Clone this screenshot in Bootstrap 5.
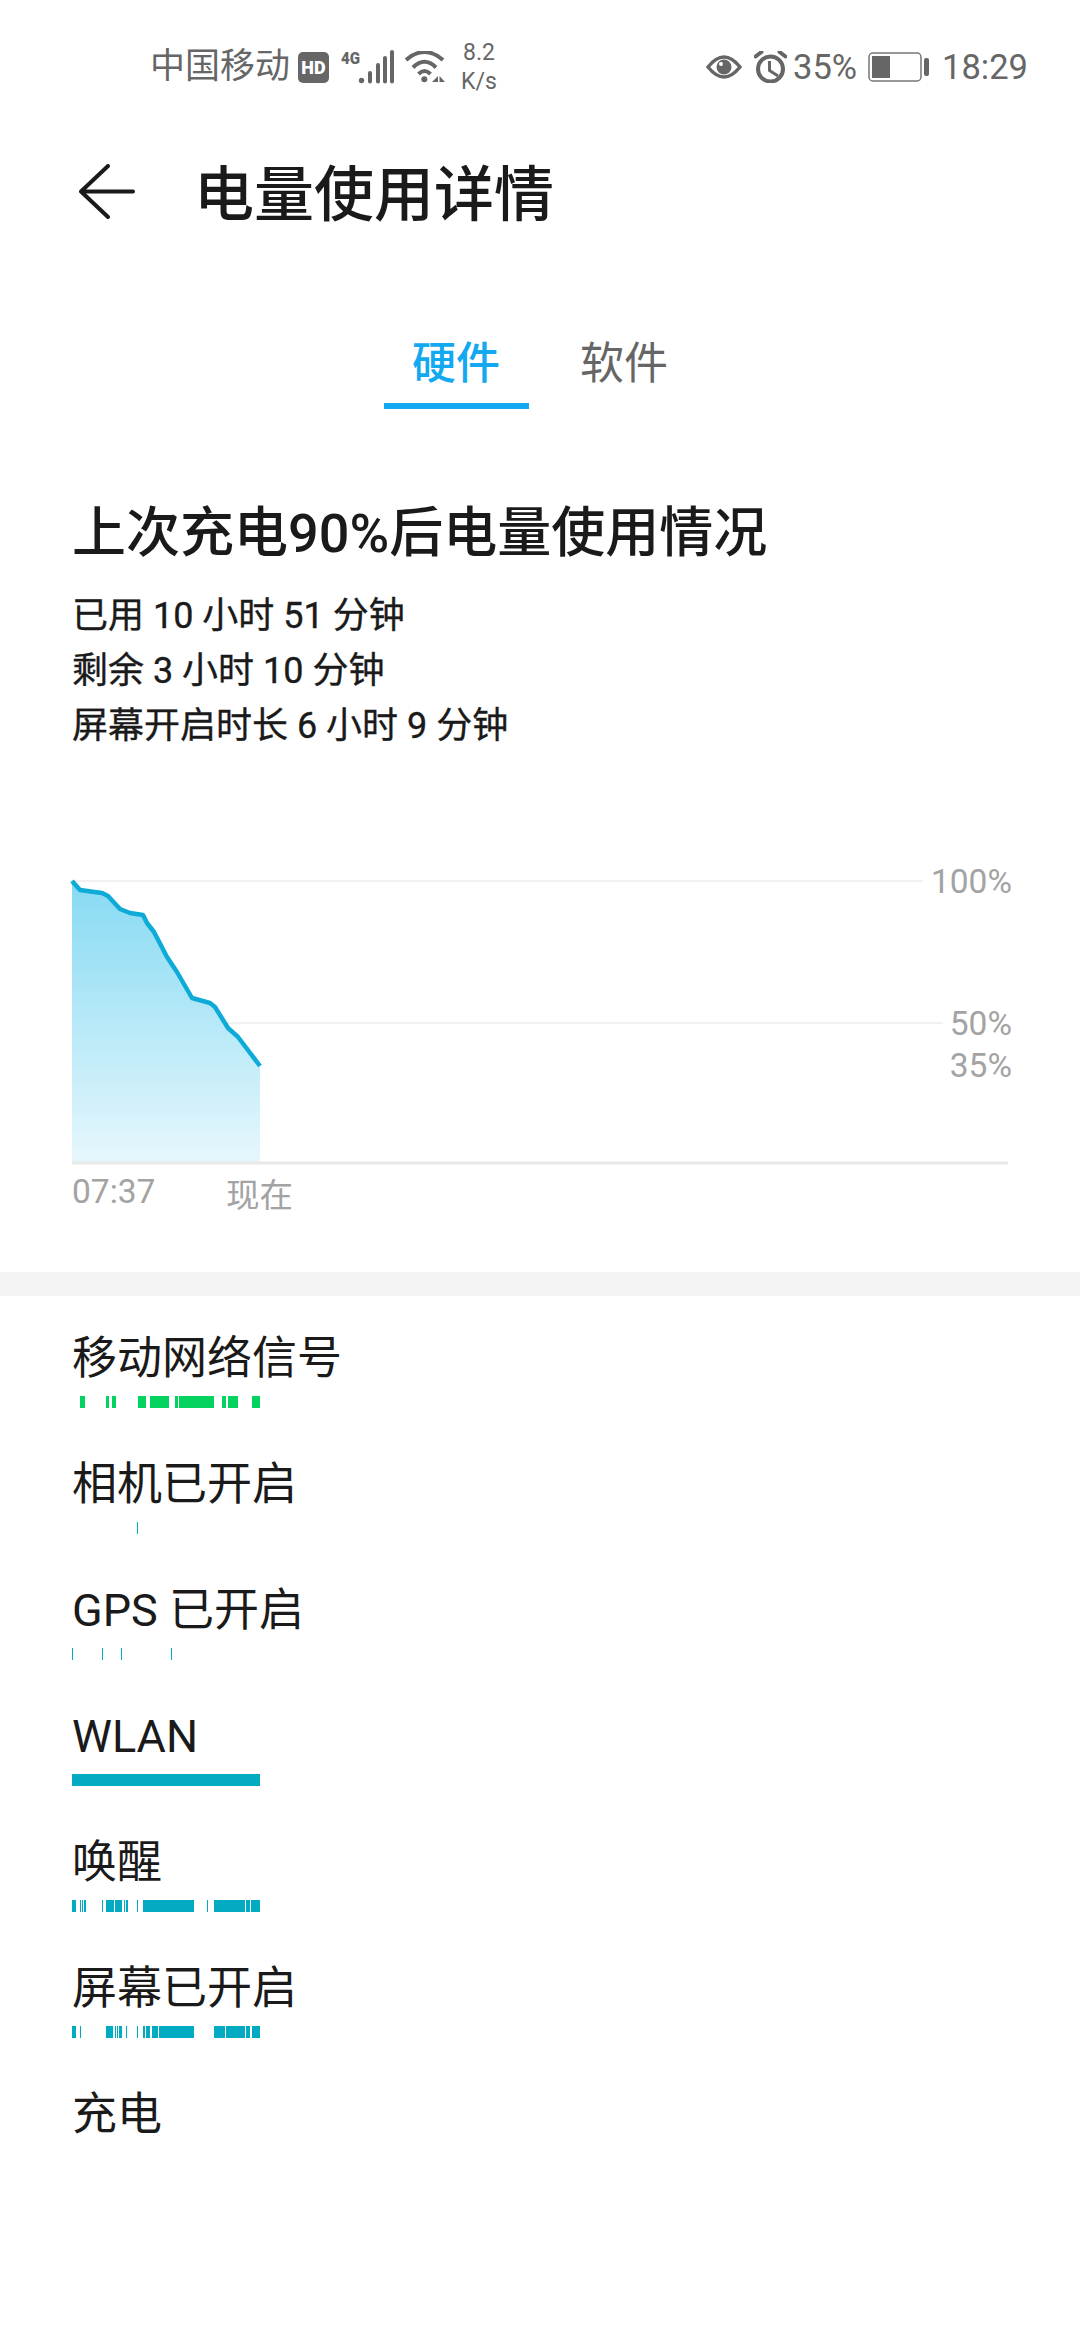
<!DOCTYPE html>
<html lang="zh-CN">
<head>
  <meta charset="UTF-8" />
  <meta name="viewport" content="width=device-width, initial-scale=1.0"/>
  <title>电量使用详情</title>
  <link href="https://cdn.jsdelivr.net/npm/bootstrap@5.3.0/dist/css/bootstrap.min.css" rel="stylesheet"/>
  <style>
    body { width: 1080px; height: 2340px; overflow: hidden; background: #fff; color: #1a1a1a;
      font-family: Roboto, "Noto Sans CJK SC", sans-serif; }
    .status-row { height: 137px; padding: 45px 52px 48px 150px; color: #666; font-size: 34.5px; line-height: 44px; }
    .carrier { font-size: 35px; }
    .net-speed { font-size: 23px; line-height: 29px; text-align: center; width: 36px; margin-left: 16px; }
    .app-bar { height: 112px; padding-left: 79px; }
    .app-title { font-size: 60px; font-weight: 500; line-height: 70px; margin: 6px 0 0 59px; }
    .tab-row { height: 88px; margin-top: 72px; }
    .tab-item { width: 145px; text-align: center; font-size: 44px; line-height: 58px; color: #666; height: 88px; padding-top: 14px; margin: 0 11.5px; }
    .tab-item.on { color: #12a9f0; font-weight: 500; border-bottom: 6px solid #12a9f0; }
    .summary { padding: 93px 72px 0; }
    .summary h1 { font-size: 54px; font-weight: 500; line-height: 64px; margin: 0 0 23px; color: #1a1a1a; }
    .summary p { font-size: 36px; line-height: 55px; margin: 0; color: #1a1a1a; -webkit-text-stroke: .35px #1a1a1a; }
    .chart-box { margin-top: 106px; height: 412px; }
    .chart-box svg { display: block; }
    .chart-label { font-family: Roboto, "Noto Sans CJK SC", sans-serif; font-size: 33.5px; fill: #a3a3a3; }
    .sep-band { height: 24px; background: #f4f4f4; }
    .usage-row { height: 126px; padding: 31px 72px 0; }
    .usage-name { font-size: 45px; line-height: 64px; color: #1a1a1a; }
    .usage-bars { display: block; margin-top: 5px; }
  </style>
</head>
<body>
  <div class="status-row d-flex align-items-center justify-content-between">
    <div class="d-flex align-items-center">
      <span class="carrier">中国移动</span>
      <svg class="ms-2" width="31" height="31" viewBox="0 0 31 31">
        <rect width="31" height="31" rx="5" fill="#666"/>
        <text x="15.5" y="22" text-anchor="middle" font-family="Roboto" font-weight="900" font-size="18" fill="#fff">HD</text>
      </svg>
      <svg style="margin-left:12px" width="53" height="46" viewBox="0 -6 53 46">
        <text x="0" y="14" font-family="Roboto" font-weight="900" font-size="17" fill="#666" textLength="19" lengthAdjust="spacingAndGlyphs">4G</text>
        <circle cx="20.5" cy="30.5" r="2.7" fill="#666"/>
        <rect x="27" y="21" width="4" height="12.5" rx="2" fill="#666"/>
        <rect x="35" y="13" width="4" height="20.5" rx="2" fill="#666"/>
        <rect x="42" y="6" width="4" height="27.5" rx="2" fill="#666"/>
        <rect x="49" y="0" width="4" height="33.5" rx="2" fill="#666"/>
      </svg>
      <svg style="margin-left:11px" width="40" height="33" viewBox="0 0 40 33" fill="none" stroke="#666" stroke-width="4">
        <path d="M1 9 Q19.5 -7 38 9"/>
        <path d="M8 16.5 Q19.5 5 31 16.5"/>
        <path d="M13.5 23 Q19.5 17 25.5 23"/>
        <circle cx="19.3" cy="28.3" r="3" fill="#666" stroke="none"/>
        <path d="M33 25 L27 31 H33 Z M34.5 25 L40 31 H34.5 Z" fill="#666" stroke="none"/>
      </svg>
      <div class="net-speed"><div>8.2</div><div>K/s</div></div>
    </div>
    <div class="d-flex align-items-center">
      <svg width="36" height="28" viewBox="0 0 36 28">
        <path d="M2 14 Q18 -6 34 14 Q18 34 2 14 Z" fill="none" stroke="#666" stroke-width="3.5"/>
        <circle cx="18" cy="14" r="7.5" fill="#666"/>
        <circle cx="15" cy="11" r="2" fill="#fff"/>
      </svg>
      <svg style="margin-left:12px" width="33" height="32" viewBox="0 0 33 32" fill="none" stroke="#666" stroke-width="4">
        <circle cx="16.5" cy="18" r="12.5"/>
        <path d="M15.5 10 V19.5 L24 25" stroke-width="3"/>
        <path d="M1.5 5.5 L7.5 1 M31.5 5.5 L25.5 1" stroke-linecap="round"/>
      </svg>
      <span style="margin-left:6px">35%</span>
      <svg style="margin-left:11px" width="61" height="30" viewBox="0 0 61 30">
        <rect x="1" y="1" width="52" height="28" rx="4" fill="none" stroke="#777" stroke-width="1.5"/>
        <rect x="4" y="4" width="18" height="22" fill="#666"/>
        <rect x="56" y="6" width="5" height="18" rx="2" fill="#666"/>
      </svg>
      <span style="margin-left:13px">18:29</span>
    </div>
  </div>

  <div class="app-bar d-flex align-items-center">
    <svg width="56" height="58" viewBox="0 0 56 58" fill="none" stroke="#1a1a1a" stroke-width="4" stroke-linecap="round" stroke-linejoin="round">
      <path d="M54 27.5 H2 M29 2 L2 27.5 L29 53"/>
    </svg>
    <h2 class="app-title">电量使用详情</h2>
  </div>

  <div class="tab-row d-flex justify-content-center">
    <div class="tab-item on">硬件</div>
    <div class="tab-item">软件</div>
  </div>

  <div class="summary">
    <h1>上次充电90%后电量使用情况</h1>
    <p>已用 10 小时 51 分钟</p>
    <p>剩余 3 小时 10 分钟</p>
    <p>屏幕开启时长 6 小时 9 分钟</p>
  </div>

  <div class="chart-box">
    <svg width="1080" height="412" viewBox="0 860 1080 412">
      <defs>
        <linearGradient id="fillGrad" x1="0" y1="0" x2="0" y2="1">
          <stop offset="0" stop-color="#86daf3"/>
          <stop offset="1" stop-color="#e6f7fc"/>
        </linearGradient>
      </defs>
      <line x1="72" x2="923" y1="881" y2="881" stroke="#f1f1f1" stroke-width="2"/>
      <line x1="72" x2="943" y1="1023" y2="1023" stroke="#f1f1f1" stroke-width="2"/>
      <path id="fillArea" fill="url(#fillGrad)"/>
      <line x1="72" x2="1008" y1="1163" y2="1163" stroke="#e8e8e8" stroke-width="3"/>
      <path id="lineArea" fill="none" stroke="#0fabd8" stroke-width="4.5" stroke-linejoin="round"/>
      <text class="chart-label" x="1012" y="893" text-anchor="end">100%</text>
      <text class="chart-label" x="1012" y="1035" text-anchor="end">50%</text>
      <text class="chart-label" x="1012" y="1077" text-anchor="end">35%</text>
      <text class="chart-label" x="72" y="1203">07:37</text>
      <text class="chart-label" x="226" y="1207">现在</text>
    </svg>
  </div>

  <div class="sep-band"></div>

  <div id="usageList"></div>

  <script src="https://cdn.jsdelivr.net/npm/bootstrap@5.3.0/dist/js/bootstrap.bundle.min.js"></script>
  <script>
    // battery curve, page coordinates
    const curve = [[72,881],[80,890],[102,893],[108,896],[120,909],[130,913],[143,915],[147,923],[154,932],[167,957],[177,972],[192,998],[210,1003],[215,1007],[228,1028],[238,1037],[260,1066]];
    const linePath = 'M' + curve.map(p => p.join(' ')).join(' L');
    document.getElementById('lineArea').setAttribute('d', linePath);
    document.getElementById('fillArea').setAttribute('d', linePath + ' L260 1162 L72 1162 Z');

    // on-segments as [from, to] in screen px
    const green = '#05d35f', teal = '#02abc2';
    const rows = [
      ['移动网络信号', green, [[80,85],[106,109],[112,116],[138,146],[150,169],[175,178],[179,214],[222,226],[228,238],[252,260]]],
      ['相机已开启', teal, [[137,138]]],
      ['GPS 已开启', teal, [[72,73],[102,103],[121,122],[171,172]]],
      ['WLAN', teal, [[72,260]]],
      ['唤醒', teal, [[72,76],[80,81],[82,83],[84,86],[102,103],[106,114],[115,122],[124,125],[126,128],[137,138],[143,194],[207,208],[214,245],[246,250],[251,260]]],
      ['屏幕已开启', teal, [[72,76],[80,81],[106,113],[115,116],[117,118],[119,122],[126,127],[137,138],[143,145],[146,150],[152,158],[159,194],[214,225],[226,245],[246,250],[252,260]]],
      ['充电', teal, []]
    ];
    document.getElementById('usageList').innerHTML = rows.map(([name, color, segs]) => `
      <div class="usage-row">
        <div class="usage-name">${name}</div>
        <svg class="usage-bars" width="188" height="12" viewBox="72 0 188 12">
          ${segs.map(([a, b]) => `<rect x="${a}" y="0" width="${b - a}" height="12" fill="${color}"/>`).join('')}
        </svg>
      </div>`).join('');
  </script>
</body>
</html>
